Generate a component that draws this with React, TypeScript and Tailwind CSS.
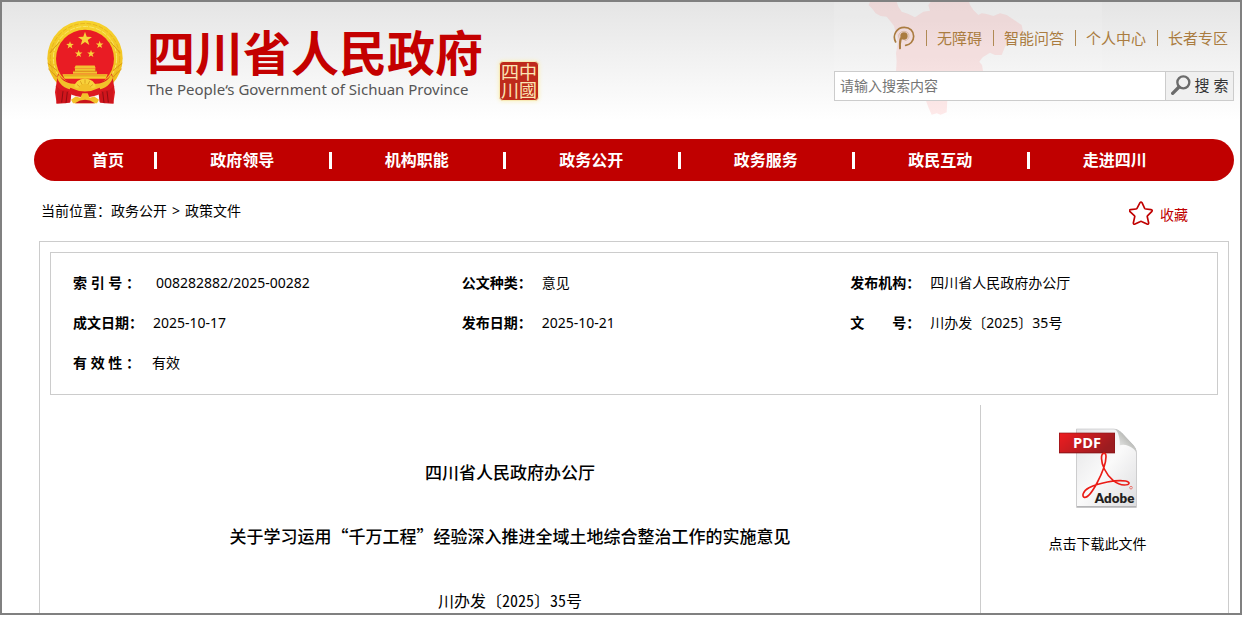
import type { ReactNode } from "react";

const topLinks = ["无障碍", "智能问答", "个人中心", "长者专区"];

const navItems = ["政府领导", "机构职能", "政务公开", "政务服务", "政民互动", "走进四川"];

const docInfo = [
  { label: "索 引 号 ：", value: "008282882/2025-00282", gap: "ml-4" },
  { label: "公文种类：", value: "意见", gap: "ml-2.5" },
  { label: "发布机构：", value: "四川省人民政府办公厅", gap: "ml-2.5" },
  { label: "成文日期：", value: "2025-10-17", gap: "ml-2.5" },
  { label: "发布日期：", value: "2025-10-21", gap: "ml-2.5" },
  { label: "文　　号：", value: "川办发〔2025〕35号", gap: "ml-2.5" },
  { label: "有 效 性 ：", value: "有效", gap: "ml-3" },
];

function starPoints(cx: number, cy: number, r: number) {
  return Array.from({ length: 10 }, (_, i) => {
    const a = (Math.PI / 5) * i - Math.PI / 2;
    const d = i % 2 ? r * 0.4 : r;
    return `${(cx + d * Math.cos(a)).toFixed(1)},${(cy + d * Math.sin(a)).toFixed(1)}`;
  }).join(" ");
}

function Emblem() {
  return (
    <svg className="w-[76px] h-[84px] shrink-0" viewBox="36 29 228 251" role="img" aria-label="国徽">
      <defs>
        <linearGradient id="gold" x1="0" y1="0" x2="0" y2="1">
          <stop offset="0" stopColor="#f6d22c" />
          <stop offset="1" stopColor="#efb91d" />
        </linearGradient>
      </defs>
      <circle cx="150" cy="143" r="113" fill="url(#gold)" />
      <circle cx="150" cy="143" r="104" fill="none" stroke="#e0a61c" strokeWidth="2" strokeDasharray="14 5" />
      <circle cx="150" cy="143" r="95" fill="none" stroke="#fbe566" strokeWidth="3" strokeDasharray="16 4" />
      <path d="M38 158l28 22M40 175l32 30M262 158l-28 22M260 175l-32 30M44 128l30-34M256 128l-30-34" stroke="#d99a16" strokeWidth="3" />
      <circle cx="150" cy="145" r="87" fill="#e91c24" />
      <g fill="#f8d23a">
        <polygon points={starPoints(150, 86, 22)} />
        <polygon points={starPoints(105, 104, 12)} />
        <polygon points={starPoints(194, 103, 12)} />
        <polygon points={starPoints(131, 130, 12)} />
        <polygon points={starPoints(168, 130, 12)} />
      </g>
      {/* gate */}
      <path d="M122 165h57l3 8h-64zM120 174h61v8h-61zM114 183h72v7h-72z" fill="#f3c331" />
      <path d="M82 191h136l-6 14H89z" fill="#f6cb2e" />
      <path d="M114 182h72M86 196h128" stroke="#cf8d12" strokeWidth="2" />
      {/* ribbons and gear */}
      <path d="M69 188c10 18 26 24 42 28l-6 60-40 3-5-34z" fill="#dd1a20" />
      <path d="M231 188c-10 18-26 24-42 28l6 60 40 3 5-34z" fill="#dd1a20" />
      <path d="M72 192c8 22 34 30 58 28l20-9 20 9c24 2 50-6 58-28l6 10c-10 26-30 37-62 38l-22 8-22-8c-32-1-52-12-62-38z" fill="#f2c12a" />
      <path d="M62 226l14 12 34 5-4 32-14 3-28 1c4-16 4-36-2-53z" fill="#cf151c" />
      <path d="M238 226l-14 12-34 5 4 32 14 3 28 1c-4-16-4-36 2-53z" fill="#cf151c" />
      <path d="M84 242l-4 34M97 244l-4 33M216 242l4 34M203 244l4 33" stroke="#8f0c12" strokeWidth="3" />
      <path d="M106 232q44 22 88 0l6 16q-50 24-100 0z" fill="#dd1a20" />
      <path d="M118 230a32 26 0 0164 0l-12 4a20 14 0 00-40 0z" fill="#f8d23a" />
      <path d="M126 222l8 6M136 212l5 10M150 207v12M164 212l-5 10M174 222l-8 6" stroke="#cf8d12" strokeWidth="2" />
      <path d="M108 268l14-10 14 4 6-14h16l6 14 14-4 14 10-6 10h-72z" fill="#f3c22a" />
      <path d="M120 278q30-20 60 0z" fill="#c9151b" />
    </svg>
  );
}

function Seal() {
  return (
    <div className="size-10 shrink-0 p-px rounded-sm border border-[#f7ebb8] bg-[#be2a1c] text-[#fbe6b4] shadow-[0_0_4px_#f9efb4]">
      <p className="size-9 text-lg leading-[18px] [writing-mode:vertical-rl] break-all font-['Noto_Sans_CJK_TC',sans-serif]">
        中國四川
      </p>
    </div>
  );
}

function ProvinceMap() {
  return (
    <svg className="absolute top-0 right-[138px] w-[268px] h-[118px]" viewBox="42 6 804 354" aria-hidden="true">
      <rect x="42" y="6" width="804" height="354" fill="#ffffff" opacity="0.12" />
      <path
        d="M150 6l-4 9 12 13 9 12 15 8 18 2 10 12 12 16 6 22 5 30-5 30 2 25-2 28 30 50 42 35 18 4 7 20 10 22 15-4 12 4 18-7 2-37 40-20 25-30 43-32-4-23-8-10 10-13 22-14 15 7h20l10-25 20-30 35-10-5-25-45-30-20-5-20 8-20-6-15-2-10 5-15-15-10-15-5-15-15-4h-90l-15 19 5 17-20 3-25 17-20-10-20-7-10-15-7-20-2-4z"
        fill="#ff6b6b"
        opacity="0.14"
      />
    </svg>
  );
}

function AccessIcon() {
  return (
    <svg className="w-[22px] h-6" viewBox="0 0 66 72" fill="none" stroke="#aa7c40" strokeWidth="5" strokeLinecap="round">
      <path d="M8 48C-3 28 11 4 34 4c17 0 28 12 28 27 0 15-11 25-24 27" />
      <path d="M31 31c-10 3-11 14-10 36" strokeWidth="6" />
      <circle cx="33" cy="30" r="11" fill="#aa7c40" stroke="none" />
      <path d="M20 40c-8-14 2-24 13-24 9 0 15 6 15 14 0 7-5 13-12 14" strokeWidth="2" opacity="0.5" />
    </svg>
  );
}

function SearchIcon() {
  return (
    <svg className="w-5 h-5 shrink-0" viewBox="0 0 60 60" fill="none" stroke="#6b6b6b" aria-hidden="true">
      <circle cx="37" cy="22" r="18" strokeWidth="7" />
      <path d="M24 36L5 55" strokeWidth="10" strokeLinecap="round" />
    </svg>
  );
}

function PdfIcon() {
  return (
    <svg className="w-[78px] h-20" viewBox="33 25 234 240" aria-hidden="true">
      <defs>
        <linearGradient id="sheet" x1="0" y1="0" x2="1" y2="1">
          <stop offset="0" stopColor="#e4e4e6" />
          <stop offset="0.5" stopColor="#fafafa" />
          <stop offset="1" stopColor="#dddddf" />
        </linearGradient>
        <linearGradient id="ribbon" x1="0" y1="0" x2="1" y2="0.4">
          <stop offset="0" stopColor="#ee1c20" />
          <stop offset="1" stopColor="#9c1c20" />
        </linearGradient>
        <linearGradient id="fold" x1="0" y1="1" x2="1" y2="0">
          <stop offset="0" stopColor="#ffffff" />
          <stop offset="0.5" stopColor="#c8c9c6" />
          <stop offset="1" stopColor="#8b8d88" />
        </linearGradient>
      </defs>
      <path d="M85 27h112c10 0 18 6 26 14l33 35c7 8 10 15 10 24v164H85z" fill="#b4b4b6" />
      <path d="M87 29h110c10 0 17 5 24 13l33 35c7 8 10 14 10 23v159H87z" fill="url(#sheet)" />
      <path d="M198 29c9 2 12 10 15 22 2 10 3 17 2 26 8-3 18-2 27 2 10 4 20 12 23 19 0-9-4-15-10-22l-34-36c-7-7-14-11-23-11z" fill="url(#fold)" />
      <rect x="33" y="39" width="168" height="62" fill="#8a1518" />
      <rect x="35" y="41" width="164" height="57" fill="url(#ribbon)" />
      <text x="117" y="86" fill="#fff" fontFamily="'Open Sans', sans-serif" fontSize="44" fontWeight="700" textAnchor="middle">PDF</text>
      <path
        d="M167 101c-9 1-9 24 2 47 13 27 37 48 60 48 17 0 19-9 4-12-28-5-82 6-110 20-19 10-22 27-14 29 9 2 24-17 38-43 14-27 27-62 27-79 0-7-2-11-7-10z"
        fill="none"
        stroke="#ea1c16"
        strokeWidth="5"
      />
      <circle cx="249" cy="204" r="4" fill="none" stroke="#ea4a44" strokeWidth="2" />
      <text x="259" y="250" fill="#231f20" fontFamily="Lato, sans-serif" fontSize="40" fontWeight="800" textAnchor="end">Adobe</text>
    </svg>
  );
}

function Bar() {
  return <span className="w-px h-4 bg-[#b08a54]" aria-hidden="true" />;
}

function NavLink({ children }: { children: ReactNode }) {
  return (
    <a href="#" className="text-base leading-6 font-bold text-white hover:underline">
      {children}
    </a>
  );
}

export default function App() {
  return (
    <div
      lang="zh-CN"
      className="min-h-screen flex flex-col pb-0.5 bg-white text-black text-sm font-['Noto_Sans','Noto_Sans_CJK_SC',sans-serif]"
    >
      <div className="flex-1 flex flex-col border-2 border-[#808080]">
        {/* Header */}
        <header className="relative flex items-start justify-between pl-[45px] pr-1.5 pt-[18px] pb-[35px] bg-linear-to-b from-[#e5e5e5] to-white to-[118px]">
          <ProvinceMap />
          <div className="relative flex items-start">
            <Emblem />
            <div className="ml-6 mt-[9px] flex flex-col gap-0.5 whitespace-nowrap">
              <h1 className="text-5xl leading-12 font-bold text-[#c40000]">四川省人民政府</h1>
              <p className="text-[15px] leading-5 text-[#555]">The People‘s Government of Sichuan Province</p>
            </div>
            <div className="ml-4 mt-[41px]">
              <Seal />
            </div>
          </div>

          <div className="relative w-[400px] pt-1.5 flex flex-col gap-[21px]">
            <div className="flex items-center justify-end gap-[11px] pr-1.5 text-[15px] leading-6 text-[#aa7c40]">
              <a href="#" aria-label="无障碍浏览">
                <AccessIcon />
              </a>
              {topLinks.map((t) => (
                <span key={t} className="flex items-center gap-2.5">
                  <Bar />
                  <a href="#" className="hover:underline">{t}</a>
                </span>
              ))}
            </div>
            <form className="flex h-[30px] border border-[#ccc] bg-white" onSubmit={(e) => e.preventDefault()}>
              <input
                type="text"
                aria-label="搜索内容"
                placeholder="请输入搜索内容"
                className="flex-1 min-w-0 px-[5px] text-sm outline-none placeholder:text-[#757575]"
              />
              <button
                type="submit"
                className="w-[68px] pb-0.5 flex items-center justify-center gap-1 border-l border-[#ccc] bg-[#f0f0f0] text-[15px] leading-6 text-[#333]"
              >
                <SearchIcon />
                <span className="whitespace-nowrap">搜 索</span>
              </button>
            </form>
          </div>
        </header>

        {/* Main nav */}
        <nav className="ml-8 mr-1.5 h-[42px] pl-[27px] pr-8 flex items-center rounded-full bg-[#c00000] text-center">
          <div className="w-[94px]">
            <NavLink>首页</NavLink>
          </div>
          {navItems.map((t) => (
            <div key={t} className="flex-1 flex items-center">
              <span className="w-[3px] h-[17px] -ml-px bg-white" aria-hidden="true" />
              <span className="flex-1 pr-0.5">
                <NavLink>{t}</NavLink>
              </span>
            </div>
          ))}
        </nav>

        {/* Breadcrumb */}
        <div className="flex justify-between pl-[39px] pr-[52px] pt-5 pb-4">
          <div className="flex gap-[5px] leading-5">
            <span>
              当前位置：<a href="#" className="hover:underline">政务公开</a>
            </span>
            <span>&gt;</span>
            <a href="#" className="hover:underline">政策文件</a>
          </div>
          <button type="button" className="flex items-end gap-[7px] text-[#c00000]">
            <svg className="w-6 h-6" viewBox="0 0 72 72" fill="none" stroke="#c00000" strokeWidth="5" strokeLinejoin="round">
              <path d="M33 5q3-4 6 0l8 17q1 2 4 2l15 2q6 1 2 6L56 44q-2 2-1 4l4 18q0 5-5 3l-15-7q-3-2-6 0l-15 7q-5 2-5-3l4-18q1-2-1-4L3 32q-4-5 2-6l16-2q2 0 3-2z" />
            </svg>
            <span className="leading-5">收藏</span>
          </button>
        </div>

        {/* Document */}
        <main className="flex-1 flex flex-col ml-[37px] mr-[11px] pt-2.5 border border-b-0 border-[#ccc]">
          <dl className="mx-2.5 pt-2.5 pb-[11px] grid grid-cols-3 border border-[#ccc]">
            {docInfo.map((d) => (
              <div key={d.label} className="flex pl-[22px] leading-10 whitespace-nowrap">
                <dt className="font-bold">{d.label}</dt>
                <dd className={d.gap}>{d.value}</dd>
              </div>
            ))}
          </dl>

          <div className="flex-1 flex mt-2.5">
            <article className="flex-1 flex flex-col items-center gap-11 pt-[57px] font-['Noto_Sans_CJK_SC',sans-serif]">
              <h2 className="text-[17px] leading-5 font-medium">四川省人民政府办公厅</h2>
              <h2 className="text-[17px] leading-5 font-medium">
                关于学习运用“千万工程”经验深入推进全域土地综合整治工作的实施意见
              </h2>
              <p className="text-base leading-5 [font-feature-settings:'hwid']">川办发〔2025〕35号</p>
            </article>
            <aside className="w-[238px] mr-2.5 pr-1 border-l border-[#ccc]">
              <a href="#" className="flex flex-col items-center gap-[26px] pt-[23px] hover:underline">
                <PdfIcon />
                <span className="leading-5">点击下载此文件</span>
              </a>
            </aside>
          </div>
        </main>
      </div>
    </div>
  );
}
